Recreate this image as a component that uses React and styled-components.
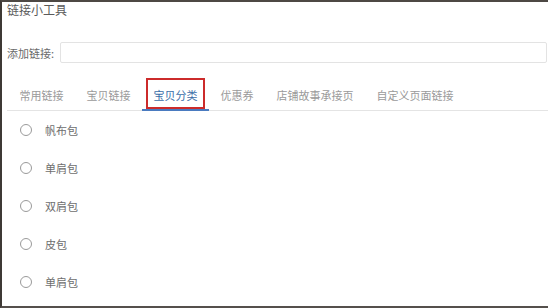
import React from "react";
import styled, { createGlobalStyle } from "styled-components";

const Global = createGlobalStyle`
  html, body { margin: 0; padding: 0; background: #fff; }
  body { font-family: "Noto Sans CJK SC", "Noto Sans", sans-serif; }
  * { box-sizing: border-box; }
`;

const Frame = styled.div`
  width: 548px;
  height: 308px;
  border-top: 2px solid #4d4844;
  border-left: 2px solid #3e3935;
  border-bottom: 2px solid #55504c;
  overflow: hidden;
  padding-left: 5px;
`;

const Title = styled.div`
  font-size: 12px;
  line-height: 16px;
  color: #5a5a5a;
  height: 16px;
`;

const FieldRow = styled.div`
  display: flex;
  align-items: center;
  margin-top: 24px;
  height: 21px;
`;

const Label = styled.span`
  font-size: 11px;
  color: #6a6a6a;
  width: 53px;
  flex: none;
`;

const Input = styled.input`
  flex: 1;
  height: 21px;
  margin-right: 1px;
  border: 1px solid #e3e3e3;
  border-radius: 2px;
  outline: none;
  background: #fff;
`;

const TabBar = styled.div`
  display: flex;
  margin-top: 15px;
  padding-left: 1px;
  border-bottom: 1px solid #e4e4e4;
`;

const Tab = styled.div`
  position: relative;
  padding: 10px 11.5px 7px;
  font-size: 11px;
  line-height: 14px;
  color: ${(p) => (p.$active ? "#3b6ea8" : "#9a9a9a")};
  border-bottom: 2px solid ${(p) => (p.$active ? "#4a7bc0" : "transparent")};
  margin-bottom: -1px;
  white-space: nowrap;
`;

const Highlight = styled.span`
  position: absolute;
  left: 4px;
  right: 4px;
  top: 0;
  bottom: 0;
  border: 2px solid #cc2b2b;
`;

const List = styled.div`
  display: flex;
  flex-direction: column;
  padding-left: 13px;
`;

const Item = styled.label`
  display: flex;
  align-items: center;
  height: 38px;
  gap: 13px;
  font-size: 11px;
  color: #6e6e6e;
`;

const Radio = styled.span`
  width: 12px;
  height: 12px;
  border-radius: 50%;
  border: 1px solid #9a9a9a;
  flex: none;
`;

const tabs = ["常用链接", "宝贝链接", "宝贝分类", "优惠券", "店铺故事承接页", "自定义页面链接"];
const items = ["帆布包", "单肩包", "双肩包", "皮包", "单肩包"];

export default function App() {
  return (
    <>
      <Global />
      <Frame>
        <Title>链接小工具</Title>
        <FieldRow>
          <Label>添加链接:</Label>
          <Input />
        </FieldRow>
        <TabBar>
          {tabs.map((t, i) => (
            <Tab key={i} $active={i === 2}>
              {t}
              {i === 2 && <Highlight />}
            </Tab>
          ))}
        </TabBar>
        <List>
          {items.map((t, i) => (
            <Item key={i}>
              <Radio />
              {t}
            </Item>
          ))}
        </List>
      </Frame>
    </>
  );
}
